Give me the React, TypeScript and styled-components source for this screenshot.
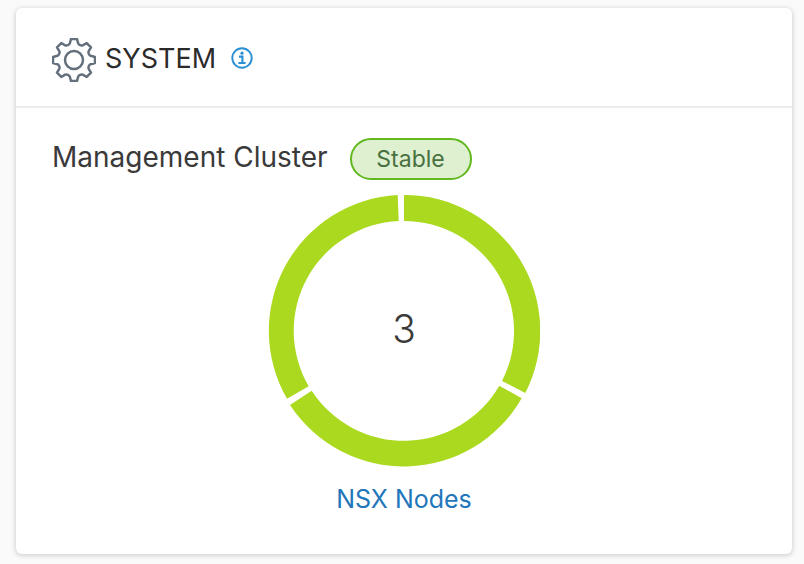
import React from "react";
import styled, { createGlobalStyle } from "styled-components";

const GlobalStyle = createGlobalStyle`
  * { box-sizing: border-box; }
  body {
    margin: 0;
    background: #fafafa;
    color: #3a3a3a;
    font-family: Inter, "Noto Sans", sans-serif;
  }
`;

const Page = styled.main`
  padding: 8px 12px 10px 16px;
`;

const Card = styled.section`
  background: #fff;
  border-radius: 6px;
  box-shadow: 0 1px 4px 1px #d4d4d4;
`;

const CardHeader = styled.header`
  display: flex;
  align-items: center;
  height: 100px;
  padding: 5px 36px 0;
  border-bottom: 2px solid #ececec;
`;

const Title = styled.h1`
  margin: 0 15px 0 9px;
  padding-bottom: 2px;
  font-size: 27px;
  line-height: 36px;
  font-weight: 400;
  color: #2b2b2b;
`;

const InfoButton = styled.button`
  display: flex;
  padding: 0 0 3px;
  border: 0;
  background: none;
  cursor: pointer;
`;

const CardBody = styled.div`
  padding: 30px 36px 38px;
`;

const StatusRow = styled.div`
  display: flex;
  align-items: center;
  gap: 22px;
`;

const StatusName = styled.h2`
  margin: 0;
  padding-bottom: 4px;
  font-size: 28px;
  line-height: 38px;
  font-weight: 400;
`;

const Badge = styled.span`
  width: 122px;
  height: 42px;
  border: 2px solid #62b81f;
  border-radius: 21px;
  background: #dff0d0;
  color: #48703f;
  font-size: 23px;
  line-height: 38px;
  text-align: center;
`;

const Figure = styled.figure`
  display: flex;
  flex-direction: column;
  align-items: center;
  margin: 15px 0 0;
`;

const Chart = styled.div`
  display: grid;
  place-items: center;
  > * { grid-area: 1 / 1; }
`;

const Count = styled.span`
  padding-bottom: 4px;
  font-size: 39px;
  line-height: 48px;
  font-weight: 300;
`;

const NodesLink = styled.a`
  margin-top: 15px;
  font-size: 25px;
  line-height: 34px;
  color: #2277bb;
  text-decoration: none;
`;

const gearPath = (() => {
  const profile: [number, number][] = [
    [-4.2, -16.6], [-3, -21], [3, -21], [4.2, -16.6],
  ];
  const at = ([x, y]: [number, number], tooth: number) => {
    const a = (tooth * Math.PI) / 4;
    return `${(x * Math.cos(a) - y * Math.sin(a)).toFixed(2)} ${(x * Math.sin(a) + y * Math.cos(a)).toFixed(2)}`;
  };
  let d = "";
  for (let i = 0; i < 8; i++) {
    d += `${i ? "L" : "M"}${at(profile[0], i)}`;
    d += `L${at(profile[1], i)}L${at(profile[2], i)}L${at(profile[3], i)}`;
    d += `C${at([4.8, -15], i)} ${at([-4.8, -15], i + 1)} ${at(profile[0], i + 1)}`;
  }
  return d + "Z";
})();

const GearIcon = () => (
  <svg width="44" height="44" viewBox="-22 -22 44 44" fill="none" stroke="#64707b" strokeWidth="2.5" strokeLinejoin="round" aria-hidden="true">
    <path d={gearPath} />
    <circle r="9" />
  </svg>
);

const InfoIcon = () => (
  <svg width="22" height="22" viewBox="0 0 22 22" fill="none" stroke="#2b8fd4" strokeWidth="1.9" aria-hidden="true">
    <circle cx="11" cy="11" r="9.7" />
    <circle cx="11" cy="6.2" r="1.6" fill="#2b8fd4" stroke="none" />
    <path d="M8 9.6h3.4v6.2M7.4 16h7.2" strokeWidth="2.1" />
  </svg>
);

const segments = [
  "M136 0A136 136 0 0 1 257.3 198L234 186A110 110 0 0 0 136 26Z",
  "M253.7 203.3A136 136 0 0 1 22 210L43.7 195.7A110 110 0 0 0 231.3 190.7Z",
  "M19 203.7A136 136 0 0 1 129.7 0L130.7 26A110 110 0 0 0 40.7 191.3Z",
];

const Donut = () => (
  <svg width="272" height="272" viewBox="0 0 272 272" fill="#aad91f" aria-hidden="true">
    {segments.map((d) => <path key={d} d={d} />)}
  </svg>
);

export default function App() {
  return (
    <>
      <GlobalStyle />
      <Page>
        <Card>
          <CardHeader>
            <GearIcon />
            <Title>SYSTEM</Title>
            <InfoButton type="button" aria-label="About system"><InfoIcon /></InfoButton>
          </CardHeader>
          <CardBody>
            <StatusRow>
              <StatusName>Management Cluster</StatusName>
              <Badge>Stable</Badge>
            </StatusRow>
            <Figure>
              <Chart>
                <Donut />
                <Count>3</Count>
              </Chart>
              <NodesLink href="#nodes">NSX Nodes</NodesLink>
            </Figure>
          </CardBody>
        </Card>
      </Page>
    </>
  );
}
